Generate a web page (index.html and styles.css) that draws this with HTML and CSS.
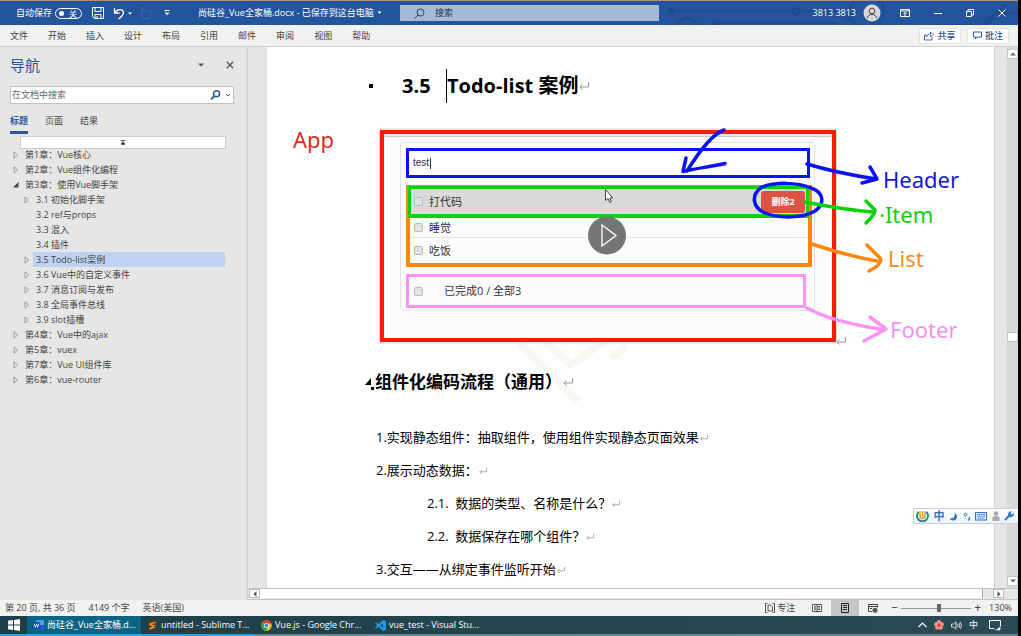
FILE: index.html
```html
<!DOCTYPE html>
<html lang="zh-CN">
<head>
<meta charset="utf-8">
<title>尚硅谷_Vue全家桶.docx</title>
<link rel="stylesheet" href="styles.css">
</head>
<body>
<svg class="defs" aria-hidden="true">
  <symbol id="ret" viewBox="0 0 12 10"><path d="M10.500 1v5H2M4.500 3.500L2 6l2.500 2.500" fill="none" stroke="#999"/></symbol>
  <symbol id="closed" viewBox="0 0 6 8"><path d="M1 .8v6.400L4.600 4z" fill="none" stroke="#8a8a8a" stroke-width=".8"/></symbol>
  <symbol id="open" viewBox="0 0 6 8"><path d="M5.500 1v5.500H0z" fill="#444"/></symbol>
</svg>
<div class="app">
  <header class="titlebar">
    <svg class="circuit" viewBox="0 0 351 24" aria-hidden="true">
      <g fill="none" stroke="#204c8e" stroke-width="2.500">
        <path d="M6 10h120M132 10h40M45 22h125M170 12l22 12M265 24h50l14-12h22M320 24l18-20"/>
        <circle cx="4" cy="10" r="2"/><circle cx="129" cy="10" r="3"/><circle cx="20" cy="28" r="11"/><circle cx="200" cy="10" r="17"/><circle cx="50" cy="22" r="2"/>
      </g>
    </svg>
    <div class="quick">
      <label class="autosave">自动保存 <input type="checkbox" class="sr"><span class="toggle"><i></i>关</span></label>
      <button class="ib save" aria-label="保存"><svg width="12" height="12" viewBox="0 0 12 12"><path d="M.5.5h11v11H2.500l-2-2zM3 .5v4h6v-4M3 11.500v-4h6v4M5 9v2" fill="none" stroke="#fff"/></svg></button>
      <button class="ib undo" aria-label="撤销"><svg width="20" height="13" viewBox="0 0 20 13"><path d="M1.500 1v5h5M1.500 6C4 2 10 1 10.500 5.500C10.500 8.500 8 10 5.500 12" fill="none" stroke="#fff" stroke-width="1.300"/><path d="M15 5.500h4l-2 2.200z" fill="#fff"/></svg></button>
      <button class="ib" aria-label="重做"><svg width="12" height="13" viewBox="0 0 12 13"><path d="M2.500 3a5 5 0 1 0 7 0M2.500 0v3.500H6" fill="none" stroke="#4068a8" stroke-width="1.200"/></svg></button>
      <button class="ib more" aria-label="自定义"><svg width="6" height="6" viewBox="0 0 6 6"><path d="M.5.500h5" stroke="#fff"/><path d="M.5 2.500h5L3 5.200z" fill="#fff"/></svg></button>
      <span class="docname">尚硅谷_Vue全家桶.docx - 已保存到这台电脑</span>
      <svg width="5" height="4" viewBox="0 0 5 4"><path d="M.5.500h4l-2 2.500z" fill="#fff"/></svg>
    </div>
    <label class="search"><svg width="11" height="11" viewBox="0 0 11 11"><circle cx="6.500" cy="4.500" r="3.500" fill="none" stroke="#27406b"/><path d="M4 7L.5 10.500" stroke="#27406b"/></svg><input type="text" placeholder="搜索" aria-label="搜索"></label>
    <div class="account">
      <span>3813 3813</span>
      <svg class="avatar" width="18" height="18" viewBox="0 0 18 18"><circle cx="9" cy="9" r="8.500" fill="#d8d8da"/><circle cx="9" cy="7" r="2.800" fill="none" stroke="#444"/><path d="M4.500 14c.5-5 8.500-5 9 0" fill="none" stroke="#444"/></svg>
      <button class="ib" aria-label="功能区显示选项"><svg width="10" height="8" viewBox="0 0 10 8"><path d="M.5.500h9v7h-9zM.5 2h9M5 7V3.500M3.500 5L5 3.500L6.500 5" fill="none" stroke="#fff"/></svg></button>
      <button class="ib" aria-label="最小化"><svg width="8" height="8" viewBox="0 0 8 8"><path d="M0 4.500h8" stroke="#fff"/></svg></button>
      <button class="ib" aria-label="还原"><svg width="8" height="8" viewBox="0 0 8 8"><path d="M.5 2.500h5v5h-5zM2 2V.500h5.500V6H6" fill="none" stroke="#fff"/></svg></button>
      <button class="ib" aria-label="关闭"><svg width="8" height="8" viewBox="0 0 8 8"><path d="M.5.500l7 7M7.500.500l-7 7" stroke="#fff"/></svg></button>
    </div>
  </header>

  <nav class="ribbon">
    <button>文件</button><button>开始</button><button>插入</button><button>设计</button><button>布局</button><button>引用</button><button>邮件</button><button>审阅</button><button>视图</button><button>帮助</button>
    <div class="ribbon-right">
      <button class="box"><svg width="10" height="10" viewBox="0 0 10 10"><path d="M3 4H.5v5h7.500V6M2.500 6.500C3 4 4.500 3 6.500 3V1L9 3.500L6.500 6V4.500" fill="none" stroke="#2b579a" stroke-width=".9"/></svg>共享</button>
      <button class="box"><svg width="9" height="9" viewBox="0 0 9 9"><path d="M.5 1h8v5H4L2.500 8V6h-2z" fill="none" stroke="#2b579a"/></svg>批注</button>
    </div>
  </nav>

  <main class="work">
    <aside class="nav">
      <div class="nav-head"><h2>导航</h2>
        <button class="ib" aria-label="选项"><svg width="6" height="4" viewBox="0 0 6 4"><path d="M0 .5h6L3 3.500z" fill="#555"/></svg></button>
        <button class="ib" aria-label="关闭窗格"><svg width="8" height="8" viewBox="0 0 8 8"><path d="M.8.800l6.400 6.400M7.200.800L.8 7.200" stroke="#555" stroke-width="1.300"/></svg></button></div>
      <div class="nav-search"><input type="text" placeholder="在文档中搜索" aria-label="在文档中搜索"><svg width="22" height="10" viewBox="0 0 22 10"><circle cx="6.500" cy="3.800" r="3" fill="none" stroke="#2b579a" stroke-width="1.500"/><path d="M4.500 6L1 9.300" stroke="#2b579a" stroke-width="1.800"/><path d="M16 4l2 2l2-2" fill="none" stroke="#555"/></svg></div>
      <div class="tabs"><button class="on">标题</button><button>页面</button><button>结果</button></div>
      <button class="jump" aria-label="跳转到开头"><svg width="6" height="5" viewBox="0 0 6 5"><path d="M.5.500h5M1 4.500h4M3 1.500L1.500 4h3z" fill="#333" stroke="#333" stroke-width=".7"/></svg></button>
      <ul class="tree">
        <li><svg><use href="#closed"/></svg><span>第1章：Vue核心</span></li>
        <li><svg><use href="#closed"/></svg><span>第2章：Vue组件化编程</span></li>
        <li><svg><use href="#open"/></svg><span>第3章：使用Vue脚手架</span>
          <ul>
            <li><svg><use href="#closed"/></svg><span>3.1 初始化脚手架</span></li>
            <li><svg></svg><span>3.2 ref与props</span></li>
            <li><svg></svg><span>3.3 混入</span></li>
            <li><svg></svg><span>3.4 插件</span></li>
            <li><svg><use href="#closed"/></svg><span class="sel">3.5 Todo-list案例</span></li>
            <li><svg><use href="#closed"/></svg><span>3.6 Vue中的自定义事件</span></li>
            <li><svg><use href="#closed"/></svg><span>3.7 消息订阅与发布</span></li>
            <li><svg><use href="#closed"/></svg><span>3.8 全局事件总线</span></li>
            <li><svg><use href="#closed"/></svg><span>3.9 slot插槽</span></li>
          </ul></li>
        <li><svg><use href="#closed"/></svg><span>第4章：Vue中的ajax</span></li>
        <li><svg><use href="#closed"/></svg><span>第5章：vuex</span></li>
        <li><svg><use href="#closed"/></svg><span>第7章：Vue UI组件库</span></li>
        <li><svg><use href="#closed"/></svg><span>第6章：vue-router</span></li>
      </ul>
    </aside>

    <section class="editor">
      <div class="viewport">
        <article class="page">
          <svg class="watermark" width="120" height="70" viewBox="0 0 120 70" aria-hidden="true"><path d="M3 4l58 58M28 2l28 26M56 24L90 0M94 20l16-13" fill="none" stroke="#f6f8f2" stroke-width="8"/></svg>
          <h1><i class="bullet"></i><span class="num">3.5</span><span class="caret"></span>Todo-list 案例<svg class="ret"><use href="#ret"/></svg></h1>
          <figure>
            <div class="picture">
              <div class="card">
                <div class="todo-head"><input type="text" value="test" aria-label="任务"><i></i></div>
                <ul class="todo-list">
                  <li class="hot"><label><input type="checkbox">打代码</label><button class="del">删除2</button></li>
                  <li><label><input type="checkbox">睡觉</label></li>
                  <li><label><input type="checkbox">吃饭</label></li>
                </ul>
                <label class="todo-foot"><input type="checkbox"><span>已完成0 / 全部3</span></label>
              </div>
            </div>
            <svg class="ret after"><use href="#ret"/></svg>
            <svg class="marks" width="728" height="230" viewBox="267 120 728 230" aria-hidden="true">
              <circle cx="607" cy="235.500" r="19" fill="#757575"/><path d="M602 225v21l14-10.500z" fill="none" stroke="#fff" stroke-width="1.300"/>
              <path d="M605.500 189.500v11l2.500-2l1.800 4l1.700-.8l-1.700-3.700h3z" fill="#fff" stroke="#333" stroke-width=".9"/>
              <g fill="none" stroke-width="3.500" stroke-linecap="round" stroke-linejoin="round">
                <g stroke="#0a14f0">
                  <path d="M724 130C712 134 697 155 687 171M686 158L683 171.500C697 168 710 167 725 163.500"/>
                  <path d="M762 187C750 195 753 208 765 213C780 219 803 218 815 211C826 203 823 192 811 188C797 182 775 182 762 187"/>
                  <path d="M807 164C830 171 850 175 876 179M870 167L877 179L862 183"/>
                </g>
                <path stroke="#0bd30b" d="M805 202C830 207 850 210 872 212M866 201L875 210C875 215 870 219 866 223"/>
                <path stroke="#ff860d" d="M812 244C832 251 855 257 877 261M867 245L880 258C883 263 875 268 869 271"/>
                <path stroke="#fb92f4" d="M807 308C830 321 860 325 883 330M870 317L886 329L864 341"/>
              </g>
            </svg>
            <span class="tag t-app">App</span>
            <span class="tag t-header">Header</span>
            <span class="tag t-item">·Item</span>
            <span class="tag t-list">List</span>
            <span class="tag t-footer">Footer</span>
          </figure>
          <h2><svg width="10" height="17" viewBox="0 0 10 17"><path d="M6 4v7H0zM6 13h3v3H6z" fill="#000"/></svg>组件化编码流程（通用）<svg class="ret"><use href="#ret"/></svg></h2>
          <div class="text">
            <p>1.实现静态组件：抽取组件，使用组件实现静态页面效果<svg class="ret"><use href="#ret"/></svg></p>
            <p>2.展示动态数据：<svg class="ret"><use href="#ret"/></svg></p>
            <p class="sub">2.1.&ensp;数据的类型、名称是什么？<svg class="ret"><use href="#ret"/></svg></p>
            <p class="sub">2.2.&ensp;数据保存在哪个组件？<svg class="ret"><use href="#ret"/></svg></p>
            <p>3.交互——从绑定事件监听开始<svg class="ret"><use href="#ret"/></svg></p>
          </div>
        </article>
        <div class="vscroll">
          <button aria-label="向上"><svg width="6" height="4" viewBox="0 0 6 4"><path d="M0 3.500h6L3 .5z" fill="#666"/></svg></button>
          <i></i>
          <button aria-label="向下"><svg width="6" height="4" viewBox="0 0 6 4"><path d="M0 .5h6L3 3.500z" fill="#666"/></svg></button>
        </div>
      </div>
      <div class="hscroll">
        <button aria-label="向左"><svg width="4" height="6" viewBox="0 0 4 6"><path d="M3.500 0v6L.5 3z" fill="#555"/></svg></button>
        <i></i>
        <button aria-label="向右"><svg width="4" height="6" viewBox="0 0 4 6"><path d="M.5 0v6l3-3z" fill="#555"/></svg></button>
      </div>
    </section>
  </main>

  <footer class="status">
    <span>第 20 页, 共 36 页</span><span>4149 个字</span><span>英语(美国)</span>
    <div class="views">
      <button class="focus"><svg width="10" height="10" viewBox="0 0 10 10"><path d="M2.500.500H.5v9h2M7.500.500h2v9h-2M3 2h2.500L7.500 4v4H3z" fill="none" stroke="#444" stroke-width=".9"/></svg>专注</button>
      <button aria-label="阅读视图"><svg width="10" height="9" viewBox="0 0 10 9"><path d="M.5.500h9v7h-9zM5 .5v8M2 2.500h2M2 4h2M2 5.500h2M6 2.500h2M6 4h2M6 5.500h2" fill="none" stroke="#444" stroke-width=".9"/></svg></button>
      <button class="cur" aria-label="页面视图"><svg width="8" height="10" viewBox="0 0 8 10"><path d="M.5.500h7v9h-7zM2 2.500h4M2 4.500h4M2 6.500h4" fill="none" stroke="#222"/></svg></button>
      <button aria-label="Web 版式"><svg width="10" height="9" viewBox="0 0 10 9"><path d="M4 7.500H.5v-7h9v3M.5 2.500h9M2 4.500h2" fill="none" stroke="#444"/><circle cx="7" cy="6.300" r="2.500" fill="#555"/></svg></button>
    </div>
    <div class="zoom"><button class="zb" aria-label="缩小">−</button><input type="range" min="0" max="100" value="54" aria-label="缩放"><button class="zb" aria-label="放大">+</button></div>
    <span>130%</span>
  </footer>

  <div class="taskbar">
    <button class="start" aria-label="开始"><svg width="12" height="12" viewBox="0 0 12 12"><path d="M0 1.700L5 1v4.600H0zM6 .900L12 0v5.600H6zM0 6.500h5V11l-5-.7zM6 6.500h6V12l-6-.9z" fill="#fff"/></svg></button>
    <button class="task active"><svg width="11" height="11" viewBox="0 0 11 11"><rect x="3" y="0" width="8" height="11" rx="1" fill="#41a5ee"/><rect x="3" y="5" width="8" height="6" fill="#185abd"/><rect y="2" width="7" height="7" rx="1" fill="#1a53b0"/><path d="M1.300 3.800l1 3.400l1.200-3l1.200 3l1-3.400" fill="none" stroke="#fff" stroke-width=".8"/></svg>尚硅谷_Vue全家桶.d...</button>
    <button class="task"><svg width="11" height="11" viewBox="0 0 11 11"><rect x="1" width="9" height="11" rx="1" fill="#3d3d3d"/><path d="M8.500 1.500L2.500 3.600v1.900l6 2v-1.900l-4-1.300l4-1.300zM8.500 5.700v1.900L2.500 9.700V8z" fill="#ff9800"/></svg>untitled - Sublime T...</button>
    <button class="task"><svg width="11" height="11" viewBox="0 0 11 11"><circle cx="5.500" cy="5.500" r="5.200" fill="#fbc116"/><path d="M5.500 5.500L1 2.900A5.200 5.200 0 0 1 10 2.900z" fill="#e33b2e"/><path d="M5.500 5.500L1 2.900A5.200 5.200 0 0 0 5 10.700l2-4z" fill="#2da94f"/><circle cx="5.500" cy="5.500" r="2.500" fill="#fff"/><circle cx="5.500" cy="5.500" r="1.900" fill="#4285f4"/></svg>Vue.js - Google Chr...</button>
    <button class="task"><svg width="11" height="11" viewBox="0 0 11 11"><path d="M8 0l3 1.300v8.400L8 11L3.500 6.700L1.200 8.500L0 7.800L2.300 5.500L0 3.200l1.200-.7l2.300 1.800zM8 3.200L5.200 5.500L8 7.800z" fill="#1f9cf0" fill-rule="evenodd"/></svg>vue_test - Visual Stu...</button>
    <div class="tray">
      <svg width="9" height="6" viewBox="0 0 9 6"><path d="M.5 5l4-4l4 4" fill="none" stroke="#fff" stroke-width="1.200"/></svg>
      <svg width="10" height="10" viewBox="0 0 10 10"><g fill="#f0908a"><circle cx="5" cy="2.300" r="2.200"/><circle cx="2.300" cy="4.300" r="2.200"/><circle cx="7.700" cy="4.300" r="2.200"/><circle cx="3.300" cy="7.600" r="2.200"/><circle cx="6.700" cy="7.600" r="2.200"/></g><circle cx="5" cy="5.200" r="1.800" fill="#e04840"/></svg>
      <svg width="11" height="9" viewBox="0 0 11 9"><path d="M.5 3h2L5 .800v7.400L2.500 6h-2zM6.500 3q1 1.500 0 3M8 2q1.800 2.500 0 5M9.400 1q2.400 3.500 0 7" fill="none" stroke="#fff" stroke-width=".8"/></svg>
      <span>中</span>
      <svg width="12" height="11" viewBox="0 0 12 11"><path d="M5 8.500H.5v-8h11v6" fill="none" stroke="#fff"/><path d="M11 7v3H7.500zM5 8.500l2 2" fill="#fff" stroke="#fff" stroke-width=".6"/></svg>
    </div>
  </div>
</div>

<div class="ime">
  <svg width="13" height="13" viewBox="0 0 13 13"><path d="M2.500 2A5.500 5.500 0 1 0 10.500 2" fill="none" stroke="#2b8a86" stroke-width="2"/><path d="M4 1v5a2.500 2.500 0 0 0 5 0V1M6.500 1v6" fill="none" stroke="#f0a030" stroke-width="1.600"/></svg>
  <b>中</b>
  <svg width="9" height="9" viewBox="0 0 9 9"><path d="M5.500.500C9.500 3 8.500 8.500 4 8.500C2 8.500 1 7.500.5 6.500C4.500 7 6.500 4.500 5.500.500z" fill="#2f78c8"/></svg>
  <svg width="8" height="9" viewBox="0 0 8 9"><circle cx="2.500" cy="2.500" r="1.400" fill="none" stroke="#2f78c8"/><path d="M6.500 5v1.500L5 8.500" fill="none" stroke="#2f78c8" stroke-width="1.300"/></svg>
  <svg width="12" height="9" viewBox="0 0 12 9"><rect x=".5" y=".5" width="11" height="7.500" fill="#d9ecfa" stroke="#2f78c8"/><path d="M2 2.500h8M2 4.300h8M3 6.200h6" stroke="#2f78c8" stroke-dasharray="1.200 .6"/></svg>
  <svg width="8" height="10" viewBox="0 0 8 10"><circle cx="4" cy="2.500" r="2.300" fill="#aaa"/><path d="M.5 10V7q0-2 3.500-2t3.500 2v3z" fill="#aaa"/></svg>
  <svg width="10" height="10" viewBox="0 0 10 10"><path d="M1 9l4.500-4.500" stroke="#2f78c8" stroke-width="2.200"/><path d="M8 .500L6.500 2.500L7.500 3.500L9.700 2.200A3 3 0 1 1 8 .500z" fill="#2f78c8"/></svg>
</div>
</body>
</html>
```
FILE: styles.css
```css
* { box-sizing: border-box; }
body, h1, h2, p, ul, figure { margin: 0; padding: 0; }
ul { list-style: none; }
body {
  font: 9px/14px "Open Sans", "Noto Sans CJK SC", sans-serif;
  color: #444;
  background: #000;
}
button, input {
  font: inherit;
  color: inherit;
  margin: 0;
  padding: 0;
  border: 0;
  background: none;
  outline: 0;
}
button { display: flex; align-items: center; justify-content: center; }
svg { display: block; flex: none; }
.defs { position: absolute; width: 0; height: 0; }
.sr { position: absolute; opacity: 0; width: 1px; height: 1px; }

.app {
  height: 100vh;
  margin-right: 3px;
  border-top: 1px solid #b98f7c;
  display: flex;
  flex-direction: column;
  background: #e6e6e6;
}

.titlebar {
  position: relative;
  display: grid;
  grid-template-columns: 400px minmax(120px, 259px) 1fr;
  align-items: center;
  height: 24px;
  flex: none;
  background: #24549c;
  color: #fff;
}
.circuit { position: absolute; right: 0; top: 0; width: 351px; height: 24px; }
.quick { display: flex; align-items: center; padding-left: 16px; white-space: nowrap; }
.autosave { display: flex; align-items: center; gap: 3px; }
.toggle {
  display: flex;
  align-items: center;
  justify-content: space-between;
  width: 27px;
  height: 11px;
  padding: 0 4px 0 3px;
  border: 1px solid #fff;
  border-radius: 6px;
  font-size: 8px;
  line-height: 9px;
}
.toggle i { width: 5px; height: 5px; border-radius: 50%; background: #fff; }
.save { margin-left: 10px; }
.undo { margin: 0 7px 0 9px; }
.more { margin: 0 28px 0 12px; }
.docname { margin-right: 3px; font-size: 9px; }
.search {
  display: flex;
  align-items: center;
  gap: 10px;
  height: 16px;
  padding-left: 14px;
  background: #a5bad9;
}
.search input { flex: 1; min-width: 0; }
.search input::placeholder { color: #22304d; opacity: 1; }
.account {
  position: relative;
  display: flex;
  align-items: center;
  justify-content: flex-end;
  gap: 24px;
  padding-right: 12px;
}
.account span { margin-right: -17px; }
.avatar { margin-right: -5px; }

.ribbon {
  display: flex;
  align-items: center;
  gap: 20px;
  height: 22px;
  flex: none;
  padding: 0 9px 0 10px;
  background: #f1f1ef;
  border-bottom: 1px solid #d0d0d0;
}
.ribbon-right { display: flex; gap: 6px; margin-left: auto; }
.box {
  gap: 3px;
  width: 42px;
  height: 16px;
  background: #fff;
  border: 1px solid #e2e2e2;
  border-radius: 2px;
  color: #24549c;
  font-weight: 500;
}

.work { display: flex; flex: 1; min-height: 0; }
.nav { width: 248px; flex: none; padding: 8px 13px 0 10px; border-right: 1px solid #d0d0d0; }
.nav-head { display: flex; align-items: center; gap: 22px; height: 20px; }
.nav-head h2 { flex: 1; font-size: 15px; line-height: 20px; font-weight: 400; color: #2b579a; }
.nav-search {
  display: flex;
  align-items: center;
  height: 18px;
  margin-top: 11px;
  padding: 0 1px;
  background: #fff;
  border: 1px solid #c2c2c2;
}
.nav-search input { flex: 1; min-width: 0; }
.nav-search input::placeholder { color: #666; opacity: 1; }
.tabs { display: flex; gap: 17px; height: 30px; }
.tabs button { height: 30px; padding-top: 6px; border-bottom: 3px solid transparent; }
.tabs .on { color: #2b579a; font-weight: 700; border-color: #2b579a; }
.jump {
  width: 206px;
  height: 13px;
  margin: 2px 0 0 10px;
  background: #fff;
  border: 1px solid #ccc;
}
.tree { margin-top: -2px; }
.tree > li { padding-left: 3px; }
.tree li { display: flex; flex-wrap: wrap; line-height: 15px; }
.tree svg { width: 6px; height: 8px; margin: 4px 3px 3px 0; }
.tree span { flex: 1; padding-left: 3px; white-space: nowrap; }
.tree ul { width: 100%; padding-left: 11px; }
.tree ul li { padding-right: 9px; }
.tree .sel { background: #bfd3f0; }

.editor { flex: 1; min-width: 0; display: flex; flex-direction: column; }
.viewport { flex: 1; min-height: 0; display: flex; }
.page {
  position: relative;
  z-index: 0;
  flex: 1;
  min-width: 0;
  margin: 0 12px 0 18px;
  padding-top: 22px;
  overflow: hidden;
  background: #fff;
  border-left: 1px solid #ddd;
  border-right: 1px solid #d4d4d4;
  color: #000;
}
.watermark { position: absolute; z-index: -1; left: 250px; top: 292px; }
.ret { display: inline-block; width: 12px; height: 10px; }
h1 {
  display: flex;
  align-items: center;
  padding-left: 102px;
  font-size: 20px;
  line-height: 34px;
}
.bullet { width: 4px; height: 4px; background: #000; }
.num { width: 44px; margin-left: 29px; }
.caret { width: 1px; height: 34px; background: #000; }

figure { position: relative; margin-top: 17px; height: 230px; padding: 10px 0 0 113px; }
.picture {
  width: 456px;
  padding: 8px 16px 27px;
  border: 4px solid #f81b05;
  background: linear-gradient(#fbe6e3 2px, #c9c9c9 2px, #c9c9c9 3px, #fcfcfc 3px);
  box-shadow: 0 0 3px #aaa;
}
.card {
  width: 415px;
  padding: 5px 5px 2px;
  border: 1px solid #e2e2e2;
  border-radius: 4px;
  font-size: 11px;
  line-height: 20px;
  color: #333;
}
.card input[type="checkbox"] {
  appearance: none;
  width: 9px;
  height: 9px;
  background: #e3e3e3;
  border: 1px solid #b8b8b8;
  border-radius: 2px;
}
.todo-head {
  display: flex;
  align-items: center;
  width: 404px;
  height: 30px;
  padding-left: 4px;
  border: 3px solid #0a14f0;
  background: #fff;
}
.todo-head input { width: 17px; font: 10px/20px "Liberation Sans", sans-serif; }
.todo-head i { width: 1px; height: 11px; background: #333; }
.todo-list {
  width: 406px;
  margin-top: 7px;
  border: 4px solid #ff860d;
  border-top-width: 1px;
}
.todo-list li { display: flex; align-items: center; height: 25px; padding-left: 4px; }
.todo-list label { display: flex; align-items: center; gap: 6px; flex: 1; }
.todo-list .hot {
  height: 32px;
  margin: 0 -1px 0 -2px;
  padding: 0 1px 0 3px;
  border: 3px solid #0bd30b;
  border-bottom-width: 4px;
  background: #dadada;
}
.todo-list .hot + li { height: 20px; border-bottom: 1px solid #e2e2e2; }
.del {
  width: 44px;
  height: 22px;
  border-radius: 3px;
  background: #dd5242;
  color: #fff;
  font-size: 9px;
  font-weight: 700;
}
.todo-foot {
  display: flex;
  align-items: center;
  gap: 21px;
  width: 400px;
  height: 34px;
  margin-top: 7px;
  padding-left: 5px;
  border: 3px solid #fb92f4;
}
.ret.after { position: absolute; left: 568px; top: 216px; }
.marks { position: absolute; left: 0; top: 0; }
.tag { position: absolute; font: 22px/28px "Noto Sans", sans-serif; }
.t-app { left: 26px; top: 5px; color: #e02a1c; }
.t-header { left: 616px; top: 45px; color: #1018d8; }
.t-item { left: 612px; top: 80px; color: #0bd30b; }
.t-list { left: 621px; top: 124px; color: #f28c1c; }
.t-footer { left: 623px; top: 195px; color: #f58ff0; }

.page h2 {
  display: flex;
  align-items: center;
  margin-top: 20px;
  padding-left: 98px;
  font-size: 17px;
  line-height: 24px;
}
.text { margin-top: 27px; padding-left: 109px; font-size: 13px; line-height: 33px; }
.text p { display: flex; align-items: center; white-space: nowrap; }
.text .ret { width: 10px; height: 8px; }
.text .sub { padding-left: 51px; }

.vscroll {
  width: 11px;
  flex: none;
  display: flex;
  flex-direction: column;
  justify-content: space-between;
  padding: 2px 0;
  background: #d9d9d9;
}
.vscroll button, .vscroll i { height: 10px; background: #fff; border: 1px solid #c4c4c4; }
.vscroll i { margin-top: 39px; }
.hscroll { display: flex; height: 12px; padding: 0 14px 1px 1px; border-top: 1px solid #c4c4c4; border-bottom: 1px solid #c4c4c4; }
.hscroll button { width: 11px; background: #fff; border: 1px solid #bbb; }
.hscroll i { flex: 1; margin-right: 10px; background: #fff; border-right: 1px solid #aaa; }

.status {
  display: flex;
  align-items: center;
  height: 16px;
  flex: none;
  gap: 13px;
  padding: 0 6px 0 5px;
  background: #f1f1ef;
}
.views { display: flex; align-items: stretch; height: 16px; margin-left: auto; }
.views button { width: 28px; }
.views .focus { width: 30px; margin-right: 8px; gap: 2px; white-space: nowrap; }
.views .cur { background: #c8c6c4; }
.zoom { display: flex; align-items: center; gap: 3px; margin: 0 -5px 0 -9px; }
.zb { font-size: 12px; }
.zoom input { appearance: none; width: 70px; height: 12px; background: linear-gradient(#999, #999) center / 100% 1px no-repeat; }
.zoom input::-webkit-slider-thumb { appearance: none; width: 4px; height: 8px; background: #666; }

.taskbar {
  display: flex;
  height: 20px;
  flex: none;
  background: linear-gradient(90deg, #1d3f49, #2b4a53);
  border-bottom: 2px solid #68858c;
  color: #fff;
}
.start { width: 27px; }
.task {
  width: 114px;
  justify-content: flex-start;
  gap: 3px;
  padding-left: 6px;
  white-space: nowrap;
  overflow: hidden;
}
.task.active { background: #0b6483; }
.start, .task:nth-child(-n+3) { box-shadow: 0 2px #25a5e5; }
.tray { display: flex; align-items: center; gap: 7px; margin-left: auto; padding-right: 17px; }
.tray svg:last-child { margin-left: 4px; }

.ime {
  position: fixed;
  right: 3px;
  top: 508px;
  display: flex;
  align-items: center;
  justify-content: space-between;
  width: 105px;
  height: 16px;
  padding: 0 4px 0 2px;
  background: linear-gradient(#fff, #edf3f8);
  border: 1px solid #c5d2de;
  border-right: 0;
}
.ime b { font-size: 11px; color: #2f78c8; }
```
